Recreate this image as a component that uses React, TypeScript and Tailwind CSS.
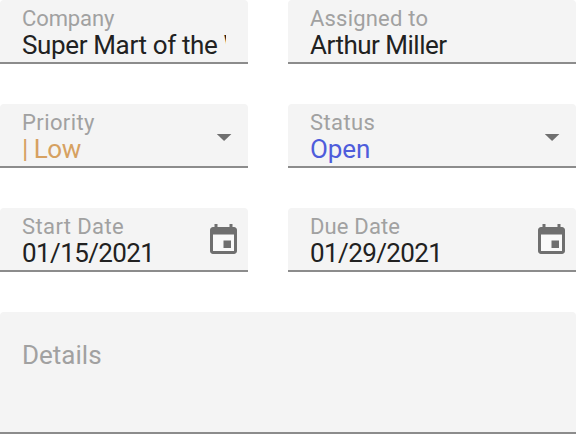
import React from "react";

type FieldProps = {
  label: string;
  value: string;
  color?: string;
  labelSpacing?: string;
  valueSpacing?: string;
  icon?: "arrow" | "calendar";
};

function Arrow() {
  return (
    <svg className="mt-[3px] mr-4 h-2 w-4 shrink-0" viewBox="0 0 16 8" fill="#6f6f6f">
      <path d="M0.8 1h14.6L8.1 8z" />
    </svg>
  );
}

function Calendar() {
  return (
    <svg className="mt-1 mr-[6px] h-9 w-9 shrink-0" viewBox="0.333 0.333 24 24" fill="#6f6f6f">
      <path d="M5 8h14v11H5z" fill="#f9f9f9" />
      <path d="M17 12h-5v5h5v-5zM16 1v2H8V1H6v2H5c-1.11 0-1.99.9-1.99 2L3 19c0 1.1.89 2 2 2h14c1.1 0 2-.9 2-2V5c0-1.1-.9-2-2-2h-1V1h-2zm3 18H5V8h14v11z" />
    </svg>
  );
}

function Field({
  label,
  value,
  color = "text-[#212121]",
  labelSpacing = "tracking-[0.4px]",
  valueSpacing = "tracking-[-0.5px]",
  icon,
}: FieldProps) {
  return (
    <div className="flex h-16 items-center rounded-t-[4px] border-b-2 border-[#8c8c8c] bg-[#f4f4f4] pl-[22px]">
      <div className={`min-w-0 flex-1 self-start overflow-hidden whitespace-nowrap pt-[6px] ${icon ? "" : "mr-[22px]"}`}>
        <div className={`h-[25px] text-[22px] leading-[26px] text-[#a1a1a1] ${labelSpacing}`}>{label}</div>
        <div className={`h-[29px] text-[26px] leading-[28px] ${valueSpacing} ${color}`}>{value}</div>
      </div>
      {icon === "arrow" && <Arrow />}
      {icon === "calendar" && <Calendar />}
    </div>
  );
}

export default function App() {
  return (
    <div className="h-[434px] w-[576px] overflow-hidden bg-white font-['Roboto',sans-serif]">
      <div className="grid grid-cols-[248px_288px] gap-10">
        <Field label="Company" labelSpacing="tracking-[-0.1px]" value="Super Mart of the West" valueSpacing="tracking-[-0.36px]" />
        <Field label="Assigned to" labelSpacing="tracking-[0.2px]" value="Arthur Miller" />
        <Field label="Priority" value="| Low" color="text-[#d6a161]" icon="arrow" />
        <Field label="Status" value="Open" valueSpacing="tracking-[-0.1px]" color="text-[#4e5cdb]" icon="arrow" />
        <Field label="Start Date" value="01/15/2021" valueSpacing="tracking-[-0.6px]" icon="calendar" />
        <Field label="Due Date" labelSpacing="tracking-[0.15px]" value="01/29/2021" valueSpacing="tracking-[-0.6px]" icon="calendar" />
        <div className="col-span-2 h-[122px] rounded-t-[4px] border-b-2 border-[#8c8c8c] bg-[#f4f4f4] px-[22px] pt-[28px] text-[26px] leading-[30px] text-[#a1a1a1]">
          Details
        </div>
      </div>
    </div>
  );
}
